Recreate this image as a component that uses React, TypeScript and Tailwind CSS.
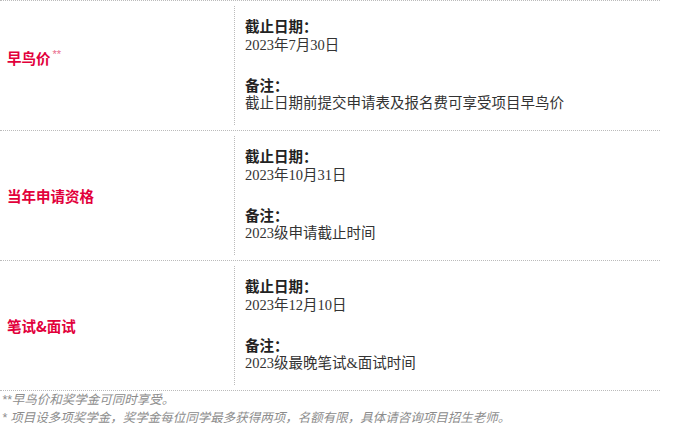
const rows = [
  {
    label: "早鸟价",
    sup: true,
    date: "2023年7月30日",
    note: "截止日期前提交申请表及报名费可享受项目早鸟价",
  },
  {
    label: "当年申请资格",
    sup: false,
    date: "2023年10月31日",
    note: "2023级申请截止时间",
  },
  {
    label: "笔试&面试",
    sup: false,
    date: "2023年12月10日",
    note: "2023级最晚笔试&面试时间",
  },
];

export default function App() {
  return (
    <div className="w-[687px] h-[428px] bg-white font-['Liberation_Serif','Noto_Sans_CJK_SC',serif] text-[#333]">
      <div className="w-[660px] border-b border-dotted border-[#bbb]">
        {rows.map((r) => (
          <div
            key={r.label}
            className="flex h-[130px] border-t border-dotted border-[#bbb]"
          >
            <div className="w-[234px] flex items-center pl-[7px]">
              <span
                className={`font-['Noto_Sans_CJK_SC',sans-serif] font-bold text-[14.5px] text-[#e2003b] ${
                  r.sup ? "pb-4" : ""
                }`}
              >
                {r.label}
                {r.sup && (
                  <sup className="text-[11px] font-normal text-[#e96a8a] ml-[2px] font-['Liberation_Sans',sans-serif]">
                    **
                  </sup>
                )}
              </span>
            </div>
            <div className="flex-1 py-[5px]">
              <div className="h-full border-l border-dotted border-[#bbb] pl-[10px] pt-[10px] text-[14.5px] leading-[19.5px]">
                <div className="font-bold text-[#222] font-['Noto_Sans_CJK_SC',sans-serif]">
                  截止日期：
                </div>
                <div>{r.date}</div>
                <div className="h-[19.5px]" />
                <div className="font-bold text-[#222] font-['Noto_Sans_CJK_SC',sans-serif]">
                  备注：
                </div>
                <div>{r.note}</div>
              </div>
            </div>
          </div>
        ))}
      </div>
      <div className="pl-[2px] italic text-[12.5px] leading-[18px] text-[#8c8c8c] font-['Liberation_Sans','Noto_Sans_CJK_SC',sans-serif]">
        <div>**早鸟价和奖学金可同时享受。</div>
        <div>* 项目设多项奖学金，奖学金每位同学最多获得两项，名额有限，具体请咨询项目招生老师。</div>
      </div>
    </div>
  );
}
